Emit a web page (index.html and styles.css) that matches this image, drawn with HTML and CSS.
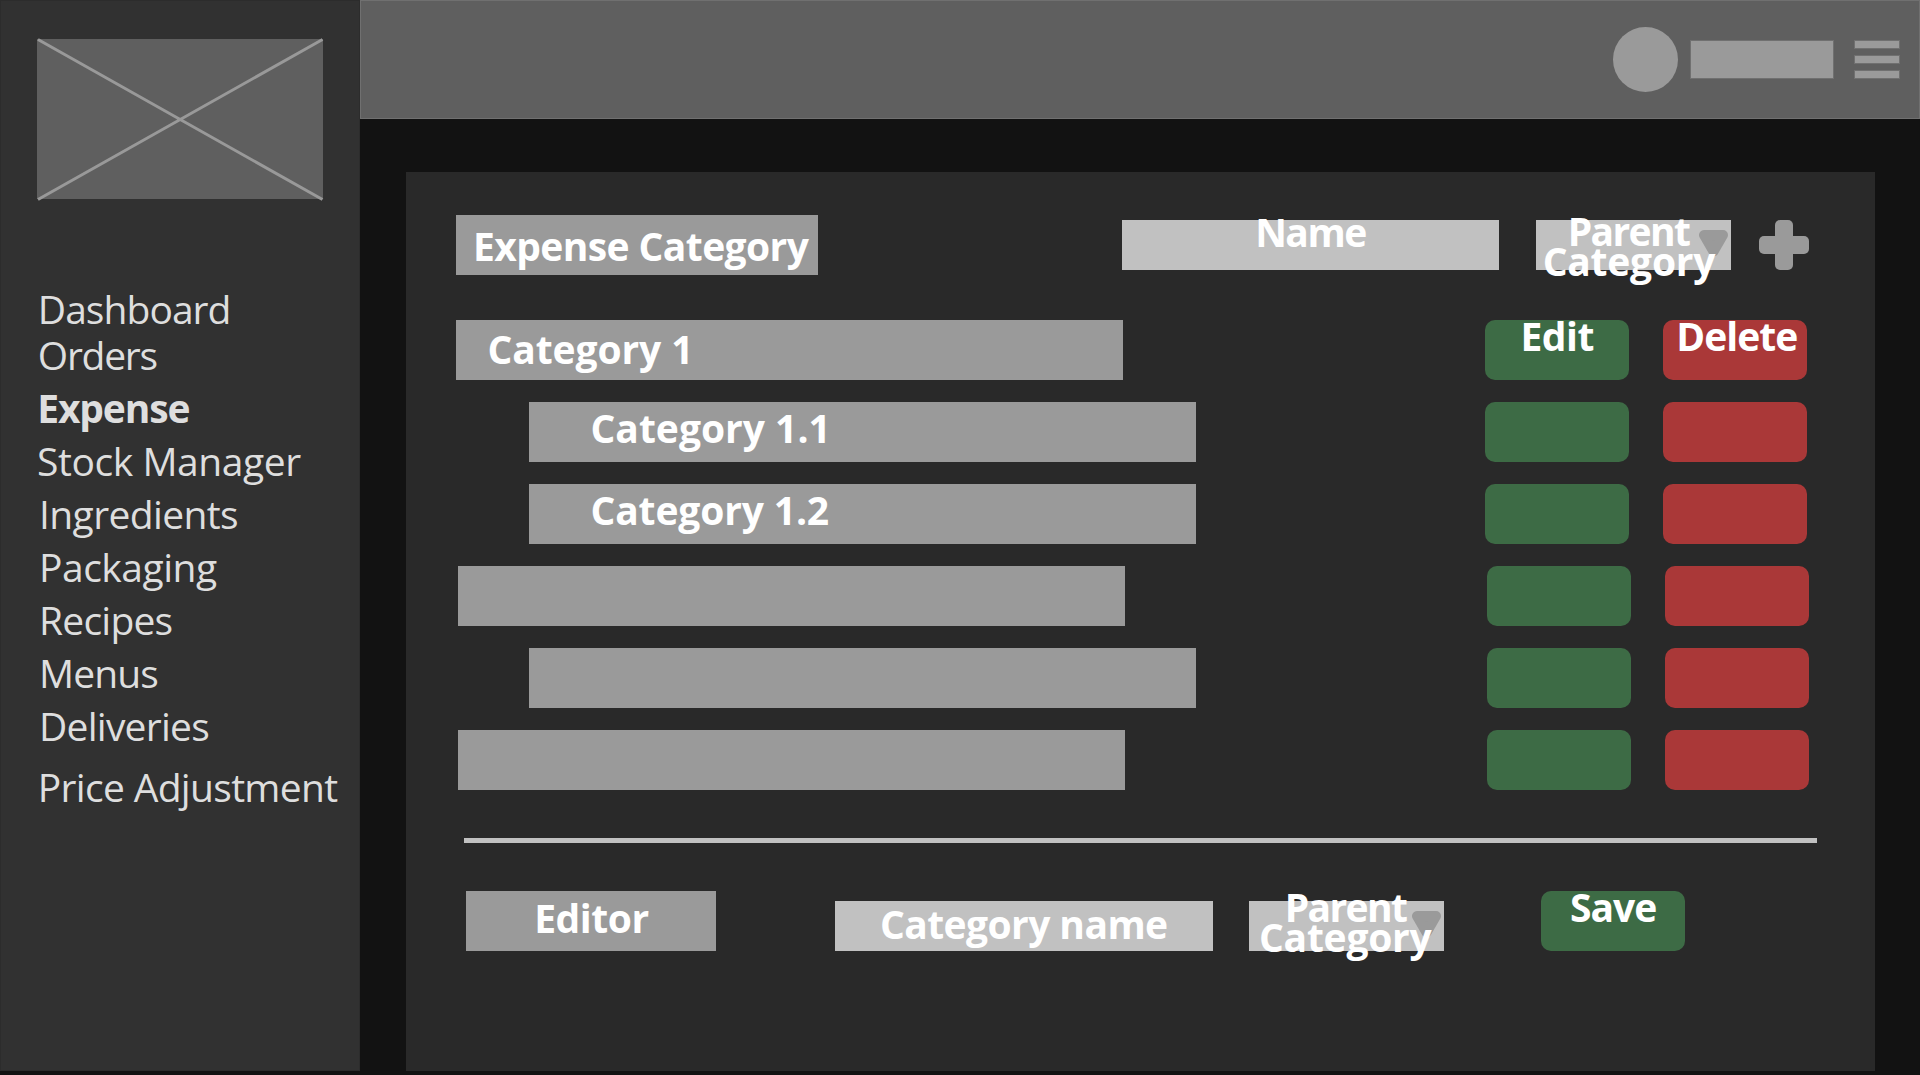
FILE: index.html
```
<!DOCTYPE html>
<html lang="en">
<head>
<meta charset="utf-8">
<title>Expense Category</title>
<link rel="stylesheet" href="styles.css">
</head>
<body>
<div class="app">
  <aside class="sidebar">
    <svg class="logo" width="288" height="164" viewBox="0 0 288 164" aria-hidden="true">
      <rect x="1" y="2" width="286" height="160" fill="#5f5f5f"/>
      <path d="M2 2.500 286.500 162.500M2 162.500 286.500 2.500" stroke="#999" stroke-width="3" fill="none"/>
    </svg>
    <nav class="nav">
      <a class="nav-dashboard">Dashboard</a>
      <a class="nav-orders">Orders</a>
      <a class="nav-expense">Expense</a>
      <a class="nav-stock">Stock Manager</a>
      <a class="nav-ingredients">Ingredients</a>
      <a class="nav-packaging">Packaging</a>
      <a class="nav-recipes">Recipes</a>
      <a class="nav-menus">Menus</a>
      <a class="nav-deliveries">Deliveries</a>
      <a class="nav-price">Price Adjustment</a>
    </nav>
  </aside>
  <div class="content">
    <header class="topbar">
      <div class="avatar"></div>
      <div class="user-name"></div>
      <div class="burger"><i></i><i></i><i></i></div>
    </header>
    <main class="panel">
      <section class="toolbar">
        <h1 class="box title"><span>Expense Category</span></h1>
        <div class="field name-field"><span>Name</span></div>
        <div class="field select">
          <svg class="arrow" width="29" height="28" viewBox="0 0 29 28"><path d="M5 5H24L14.500 21.500Z"/></svg>
          <span class="parent">Parent</span><span class="category">Category</span>
        </div>
        <svg class="plus" width="50" height="50" viewBox="0 0 50 50"><rect x="16" width="18" height="50" rx="5"/><rect y="16" width="50" height="18" rx="5"/></svg>
      </section>
      <section class="rows">
        <div class="row">
          <div class="box bar"><span class="cat-1">Category 1</span></div>
          <div class="actions"><div class="btn green"><span class="edit">Edit</span></div><div class="btn red"><span class="delete">Delete</span></div></div>
        </div>
        <div class="row child">
          <div class="box bar"><span class="cat-11">Category 1.1</span></div>
          <div class="actions"><div class="btn green"></div><div class="btn red"></div></div>
        </div>
        <div class="row child">
          <div class="box bar"><span class="cat-12">Category 1.2</span></div>
          <div class="actions"><div class="btn green"></div><div class="btn red"></div></div>
        </div>
        <div class="row shifted">
          <div class="box bar"></div>
          <div class="actions"><div class="btn green"></div><div class="btn red"></div></div>
        </div>
        <div class="row child shifted">
          <div class="box bar"></div>
          <div class="actions"><div class="btn green"></div><div class="btn red"></div></div>
        </div>
        <div class="row shifted">
          <div class="box bar"></div>
          <div class="actions"><div class="btn green"></div><div class="btn red"></div></div>
        </div>
      </section>
      <div class="divider"></div>
      <section class="editor">
        <h2 class="box editor-title"><span>Editor</span></h2>
        <div class="field category-field"><span>Category name</span></div>
        <div class="field select select-editor">
          <svg class="arrow" width="29" height="28" viewBox="0 0 29 28"><path d="M5 5H24L14.500 21.500Z"/></svg>
          <span class="parent">Parent</span><span class="category">Category</span>
        </div>
        <div class="btn green save"><span>Save</span></div>
      </section>
    </main>
  </div>
</div>
</body>
</html>
```
FILE: styles.css
```
* { box-sizing: border-box; }
body {
  margin: 0;
  background: #121212;
  color: #fff;
  font: 700 39px/53px "Open Sans", "Noto Sans", sans-serif;
  overflow: hidden;
}
h1, h2 { margin: 0; font: inherit; }
svg { display: block; flex: none; }
.app { display: flex; width: 1920px; height: 1071px; }

/* Sidebar */
.sidebar {
  flex: none;
  width: 360px;
  padding: 36px 0 0 35px;
  background: #313131;
  border: 1px solid #2c2c2c;
}
.nav {
  display: flex;
  flex-direction: column;
  gap: 8px;
  margin-top: 85px;
  color: #dedede;
  font-weight: 400;
  line-height: 45px;
  white-space: nowrap;
}
.nav a { padding-left: 3px; letter-spacing: -0.75px; }
.nav .nav-dashboard { margin-bottom: -7px; padding-left: 1.8px; letter-spacing: -0.95px; }
.nav .nav-orders { padding-left: 1.8px; letter-spacing: -1.25px; }
.nav .nav-expense { padding-left: 1.2px; letter-spacing: -1.14px; }
.nav .nav-expense { font-weight: 700; }
.nav .nav-stock { padding-left: 1px; letter-spacing: -0.43px; }
.nav .nav-ingredients { letter-spacing: -0.62px; }
.nav .nav-packaging { letter-spacing: -0.49px; }
.nav .nav-recipes { letter-spacing: -0.78px; }
.nav .nav-menus { letter-spacing: -0.88px; }
.nav .nav-price { margin-top: 8px; padding-left: 1.8px; letter-spacing: -0.68px; }

/* Top bar */
.content { width: 1560px; }
.topbar {
  display: flex;
  align-items: center;
  justify-content: flex-end;
  height: 119px;
  padding-right: 19px;
  background: #5f5f5f;
  border: 1px solid #707070;
}
.avatar { width: 65px; height: 65px; margin-right: 12px; border-radius: 50%; background: #9a9a9a; }
.user-name { width: 144px; height: 39px; margin-right: 20px; background: #9a9a9a; border: 1px solid #707070; }
.burger { display: flex; flex-direction: column; gap: 6px; width: 46px; }
.burger i { height: 9px; background: #9a9a9a; border: 1px solid #707070; }

/* Panel */
.panel {
  width: 1469px;
  height: 899px;
  margin: 53px 0 0 46px;
  padding: 43px 0 0 50px;
  background: #292929;
}
.box, .field, .btn { display: flex; flex: none; align-items: flex-start; white-space: nowrap; }
.box { height: 60px; background: #9a9a9a; }
.field { height: 50px; background: #c1c1c1; }
.btn { width: 144px; height: 60px; border-radius: 10px; }
.green { background: #3d6b45; }
.red { background: #aa3838; }

.toolbar { display: flex; align-items: center; height: 60px; }
.title { width: 362px; padding-left: 17px; letter-spacing: -0.59px; }
.title span { margin-top: 4px; }
.name-field { width: 377px; margin-left: 304px; padding-left: 133.2px; letter-spacing: -1.52px; }
.name-field span { margin-top: -15px; }
.select {
  position: relative;
  flex-direction: column;
  width: 195px;
  margin-left: 37px;
  line-height: 30px;
}
.parent { position: relative; margin: -4px 0 0 31.7px; letter-spacing: -1.63px; }
.category { position: relative; margin-left: 6.7px; letter-spacing: -0.24px; }
.arrow { position: absolute; left: 162.7px; top: 10px; }
.arrow path { fill: #9a9a9a; stroke: #9a9a9a; stroke-width: 10px; stroke-linejoin: round; }
.plus { margin-left: 28px; fill: #9a9a9a; }

.rows { display: flex; flex-direction: column; gap: 22px; margin-top: 45px; }
.row { display: flex; justify-content: space-between; width: 1351px; }
.bar { width: 667px; }
.child .bar { margin-left: 73px; }
.shifted { width: 1353px; }
.shifted:not(.child) .bar { margin-left: 2px; }
.actions { display: flex; gap: 34px; }
.cat-1 { margin: 2px 0 0 31.5px; letter-spacing: -0.1px; }
.cat-11 { margin: -1px 0 0 61.5px; }
.cat-12 { margin: -1px 0 0 61.5px; letter-spacing: -0.15px; }
.edit { margin: -11px 0 0 35.5px; letter-spacing: -0.47px; }
.delete { margin: -11px 0 0 13.3px; letter-spacing: -0.96px; }

.divider { width: 1353px; height: 5px; margin: 48px 0 0 8px; background: #c1c1c1; }

/* Editor */
.editor { display: flex; align-items: flex-end; height: 60px; margin: 48px 0 0 10px; }
.editor-title { width: 250px; padding-left: 68.2px; letter-spacing: -0.42px; }
.editor-title span { margin-top: 0; }
.category-field { width: 378px; margin-left: 119px; padding-left: 45px; letter-spacing: -0.58px; }
.category-field span { margin-top: -4px; }
.select-editor { width: 195px; margin-left: 36px; }
.select-editor .parent { margin: -9px 0 0 35.7px; }
.select-editor .category { margin-left: 10px; }
.save { margin-left: 97px; padding-left: 29px; letter-spacing: -0.97px; }
.save span { margin-top: -11px; }
```
